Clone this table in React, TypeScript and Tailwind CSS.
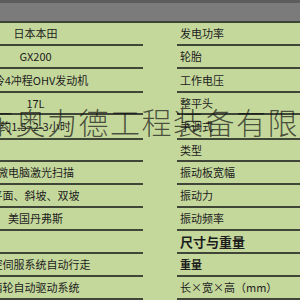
const rows = [
  { l: "日本本田", r: "发电功率", h: "h-[23px]" },
  { l: "GX200", r: "轮胎", h: "h-[23px]" },
  { l: "风冷4冲程OHV发动机", r: "工作电压", h: "h-[24px]" },
  { l: "17L", r: "整平头", h: "h-[22px]" },
  { l: "约1.5~2-3小时", r: "手调式", h: "h-[25px]" },
  { l: "", r: "类型", h: "h-[22px]" },
  { l: "微电脑激光扫描", r: "振动板宽幅", h: "h-[23px]" },
  { l: "平面、斜坡、双坡", r: "振动力", h: "h-[23px]" },
  { l: "美国丹弗斯", r: "振动频率", h: "h-[23px]" },
  { l: "", r: "尺寸与重量", h: "h-[23px]", big: true },
  { l: "电控伺服系统自动行走", r: "重量", h: "h-[23px]", bold: true },
  { l: "两轮自动驱动系统", r: "长×宽×高（mm）", h: "h-[23px]" },
];

const SpecTable = () => {
  return (
    <div className="relative w-[300px] h-[300px] overflow-hidden bg-[#c5d89c] text-[#1c1c1c] font-['Noto_Sans_CJK_SC',sans-serif] text-[11px] leading-none">
      <div className="h-[3px] bg-[#5c5c5c]" />
      <div className="h-[18px] bg-[#7b7b7b]" />
      <div className="h-[2px] bg-[#3e4536]" />
      {rows.map((row, i) => (
        <div key={i} className={`flex ${row.h}`}>
          <div className="ml-[-72px] w-[215px] shrink-0 flex items-center justify-center border-b-2 border-[#3f4637] whitespace-nowrap">
            {row.l}
          </div>
          <div className="w-[34px] shrink-0" />
          <div
            className={`flex-1 flex items-center pl-[3px] border-b-2 border-[#3f4637] whitespace-nowrap ${
              row.big ? "text-[13px] font-bold" : row.bold ? "font-bold" : ""
            }`}
          >
            {row.r}
          </div>
        </div>
      ))}
      <div className="absolute left-[-16px] top-[106px] whitespace-nowrap text-[30px] leading-none tracking-[1.5px] font-light text-[#111]/70">
        东奥力德工程装备有限公司
      </div>
    </div>
  );
};

export default function App() {
  return <SpecTable />;
}
